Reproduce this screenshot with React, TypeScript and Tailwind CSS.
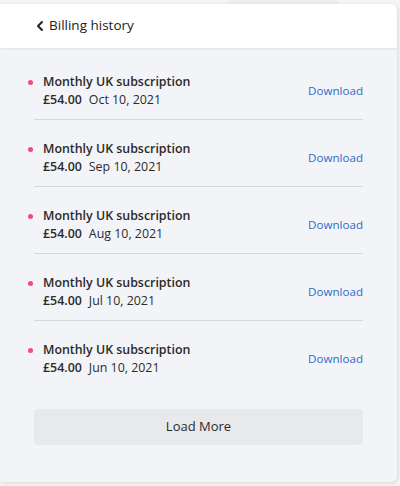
import { ChevronLeft } from 'lucide-react';

const INVOICES = [
  { id: 1, title: 'Monthly UK subscription', amount: '£54.00', date: 'Oct 10, 2021' },
  { id: 2, title: 'Monthly UK subscription', amount: '£54.00', date: 'Sep 10, 2021' },
  { id: 3, title: 'Monthly UK subscription', amount: '£54.00', date: 'Aug 10, 2021' },
  { id: 4, title: 'Monthly UK subscription', amount: '£54.00', date: 'Jul 10, 2021' },
  { id: 5, title: 'Monthly UK subscription', amount: '£54.00', date: 'Jun 10, 2021' },
];

export default function App() {
  return (
    <div
      className="relative h-[486px] w-[400px] overflow-hidden bg-[#f4f5f7] pt-[4px] text-[#2b2b2b]"
      style={{ fontFamily: '"Open Sans", "Noto Sans", sans-serif' }}
    >
      {/* tab peeking out behind the card */}
      <div className="absolute left-[226px] top-0 h-[12px] w-[114px] rounded-t-md bg-[#ededed]" />

      <div className="relative flex h-[478px] w-[397px] flex-col overflow-hidden rounded-r-md bg-[#f3f4f8] shadow-[1px_1px_4px_rgba(0,0,0,0.12)]">
        <header className="flex h-[44px] items-center bg-white pb-[1px] pl-[32px] shadow-[0_1px_2px_rgba(0,0,0,0.08)]">
          <ChevronLeft className="h-[16px] w-[16px] text-[#222]" strokeWidth={3} />
          <h1 className="ml-[1px] text-[13.5px] text-[#222]">Billing history</h1>
        </header>

        <ul className="mx-[34px] pt-[5px]">
          {INVOICES.map((inv, i) => (
            <li
              key={inv.id}
              className={`flex items-center pb-[10px] pt-[20px] ${
                i < INVOICES.length - 1 ? 'border-b border-[#d6d7da]' : ''
              }`}
            >
              <div className="flex flex-1 items-start">
                <span className="-ml-[6px] mr-[10px] mt-[7px] h-[5px] w-[5px] rounded-full bg-[#ee4a88]" />
                <div>
                  <p className="text-[12.4px] font-semibold leading-[18px] text-[#2a2a2a]">
                    {inv.title}
                  </p>
                  <p className="text-[12.4px] leading-[18px]">
                    <span className="font-semibold">{inv.amount}</span>
                    <span className="ml-[7px]">{inv.date}</span>
                  </p>
                </div>
              </div>
              <button type="button" className="text-[11.6px] text-[#2f6ac6]">
                Download
              </button>
            </li>
          ))}
        </ul>

        <div className="mx-[34px] mt-[22px]">
          <button
            type="button"
            className="h-[36px] w-full rounded-[4px] bg-[#e8e9eb] text-[13px] text-[#2b2b2b]"
          >
            Load More
          </button>
        </div>
      </div>
    </div>
  );
}
